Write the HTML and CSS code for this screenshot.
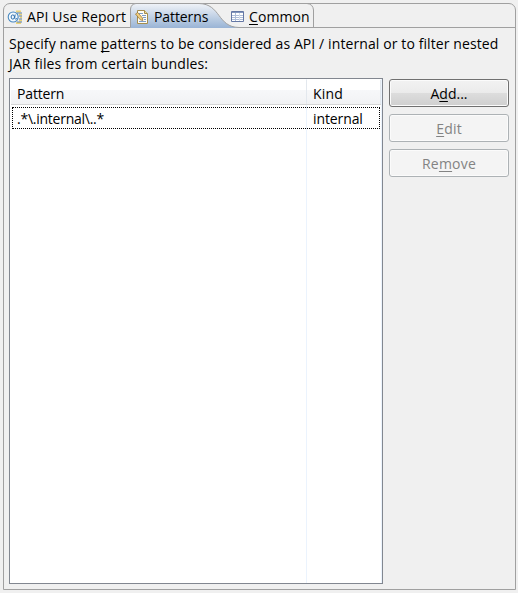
FILE: index.html
```html
<!DOCTYPE html>
<html lang="en">
<head>
<meta charset="utf-8">
<title>Patterns</title>
<link rel="stylesheet" href="styles.css">
</head>
<body>
<main class="folder">
  <nav class="tabs">
    <svg class="tab-shape" width="511" height="25" viewBox="0 0 511 25" aria-hidden="true">
      <defs>
        <linearGradient id="sel" x1="0" y1="0" x2="0" y2="1">
          <stop offset="0" stop-color="#f0f3f8"/>
          <stop offset="1" stop-color="#99b4d5"/>
        </linearGradient>
      </defs>
      <path d="M126.500 25V6Q127 1 132 .5H195C217 1 213 24 235 24.500V25Z" fill="url(#sel)"/>
      <path d="M0 24.500H126.500V6Q127 1 132 .5H195C217 1 213 24 235 24.500H511M303 .5Q309 1 309.500 7V24.500" fill="none" stroke="#a0a0a0"/>
    </svg>
    <div class="tab tab-report">
      <svg class="icon" width="16" height="16" viewBox="0 0 16 16" aria-hidden="true">
        <path d="M9 2.500h5M12 5.500h3M13 8.500h2M12 11.500h3M9 14h5" stroke="#ead27a" stroke-width="2"/>
        <path d="M10 4h5M12 7h3M12 10h3M10 13h5" stroke="#5a83b8"/>
        <circle cx="6.200" cy="8" r="5" fill="#f4f9fd" stroke="#4a8ac0" stroke-width="1.100"/>
        <ellipse cx="5.800" cy="8" rx="1.700" ry="2.100" fill="none" stroke="#2e70ad"/>
        <path d="M8.200 5.500L7.600 9.300Q8.500 11 10.300 9.300" fill="none" stroke="#2e70ad"/>
      </svg>
      <span class="t-report">API Use Report</span>
    </div>
    <div class="tab tab-patterns">
      <svg class="icon" width="16" height="16" viewBox="0 0 16 16" aria-hidden="true">
        <path d="M3.500 1.500h7l3 3v10h-10z" fill="#fffdf4" stroke="#a58d4c"/>
        <path d="M10.500 1.500v3h3" fill="#ead99b" stroke="#a58d4c"/>
        <path d="M5 4.500h4M8 6.500h4M9 8.500h3M10 10.500h2M5 12.500h7" stroke="#7c9bc8"/>
        <path d="M1.500 5l2.200-1.500 4.800 5.500.3 2.500-2.500-.7z" fill="#f3cf7e" stroke="#8a6a30" stroke-width=".7"/>
      </svg>
      <span class="t-patterns">Patterns</span>
    </div>
    <div class="tab tab-common">
      <svg class="icon" width="13" height="11" viewBox="0 0 13 11" aria-hidden="true">
        <path d="M.5.5h12v10H.5z" fill="#fff" stroke="#6477a4"/>
        <path d="M1 1.500h11" stroke="#8296bd"/>
        <path d="M1 4.500h11M1 6.500h11M1 8.500h11M4.500 2v8" stroke="#aebdd8"/>
        <path d="M8.500 2v8" stroke="#d5deec"/>
      </svg>
      <span class="t-common"><u>C</u>ommon</span>
    </div>
  </nav>
  <section class="page">
    <p class="intro"><span class="line1">Specify name <u>p</u>atterns to be considered as API / internal or to filter nested</span><br><span class="line2">JAR files from certain bundles:</span></p>
    <div class="content">
      <div class="table">
        <div class="head"><div class="c1 h-pattern">Pattern</div><div class="c2 h-kind">Kind</div></div>
        <div class="row"><div class="c1 v-pattern">.*\.internal\..*</div><div class="c2">internal</div></div>
      </div>
      <div class="buttons">
        <button class="btn">A<u>d</u>d...</button>
        <button class="btn b-wide" disabled><u>E</u>dit</button>
        <button class="btn b-wide" disabled>Re<u>m</u>ove</button>
      </div>
    </div>
  </section>
</main>
</body>
</html>
```

FILE: styles.css
```css
* { box-sizing: border-box; }
body {
  margin: 0;
  padding: 3px 2px 3px 3px;
  height: 593px;
  background: #f0f0f0;
  color: #000;
  font: 14px/20px "Open Sans", "Noto Sans", sans-serif;
}
u { text-decoration-thickness: 1px; text-underline-offset: 2px; text-decoration-skip-ink: none; }

.folder {
  display: flex;
  flex-direction: column;
  height: 587px;
  border: 1px solid #a0a0a0;
  border-radius: 7px 7px 0 0;
}

/* Tab strip; the curved outlines lie behind the labels */
.tabs { position: relative; display: flex; height: 24px; }
.tab-shape { position: absolute; left: 0; top: -1px; }
.tab { position: relative; display: flex; align-items: center; padding-top: 1px; white-space: nowrap; }
.icon { flex: none; }
.tab-report { width: 126px; padding-left: 3px; gap: 4px; }
.tab-patterns { width: 97px; padding-left: 4px; gap: 4px; }
.tab-common { width: 83px; padding-left: 4px; gap: 5px; }
.t-report { letter-spacing: .12px; }
.t-patterns { letter-spacing: -.1px; }
.t-common { letter-spacing: .1px; }

.page { padding: 6px 6px 5px 5px; }
.intro { margin: 0 0 4px; white-space: nowrap; }
.line1 { letter-spacing: .1px; }
.line2 { letter-spacing: .13px; }
.content { display: flex; gap: 6px; }

.table {
  width: 374px;
  height: 506px;
  padding: 1px;
  border: 1px solid #828790;
  background: linear-gradient(#ebf3fd, #ebf3fd) 296px 0 / 1px 100% no-repeat,
              linear-gradient(#ebf3fd, #ebf3fd) 371px 0 / 1px 100% no-repeat, #fff;
}
.head, .row { display: flex; }
.head {
  height: 25px;
  padding-top: 4px;
  border-bottom: 1px solid #d5d5d5;
  background: linear-gradient(#e3e8ee, #e3e8ee) 295px 0 / 1px 100% no-repeat,
              linear-gradient(#e3e8ee, #e3e8ee) 100% 0 / 1px 100% no-repeat,
              linear-gradient(#fff 40%, #f7f8fa 41%, #f1f2f4);
}
.row {
  height: 22px;
  width: 368px;
  margin: 2px 0 0 1px;
  border: 1px dotted #000;
  line-height: 22px;
}
.head .c1 { width: 302px; padding-left: 6px; }
.row .c1 { width: 300px; padding-left: 4px; }
.h-pattern { letter-spacing: -.15px; }
.h-kind { letter-spacing: .2px; }
.v-pattern { letter-spacing: -.25px; }
.row .c2 { letter-spacing: -.1px; }

.buttons { display: flex; flex-direction: column; gap: 7px; padding-top: 1px; }
.btn {
  width: 120px;
  height: 28px;
  padding: 1px 0 0;
  border: 1px solid #707070;
  border-radius: 3px;
  background: linear-gradient(#f2f2f2, #ebebeb 48%, #dddddd 50%, #cfcfcf);
  box-shadow: inset 0 0 0 1px #fbfbfb;
  color: #000;
  font: inherit;
}
.btn:disabled {
  border-color: #adb2b5;
  background: #f4f4f4;
  color: #838383;
}
.b-wide { letter-spacing: .2px; }
```
